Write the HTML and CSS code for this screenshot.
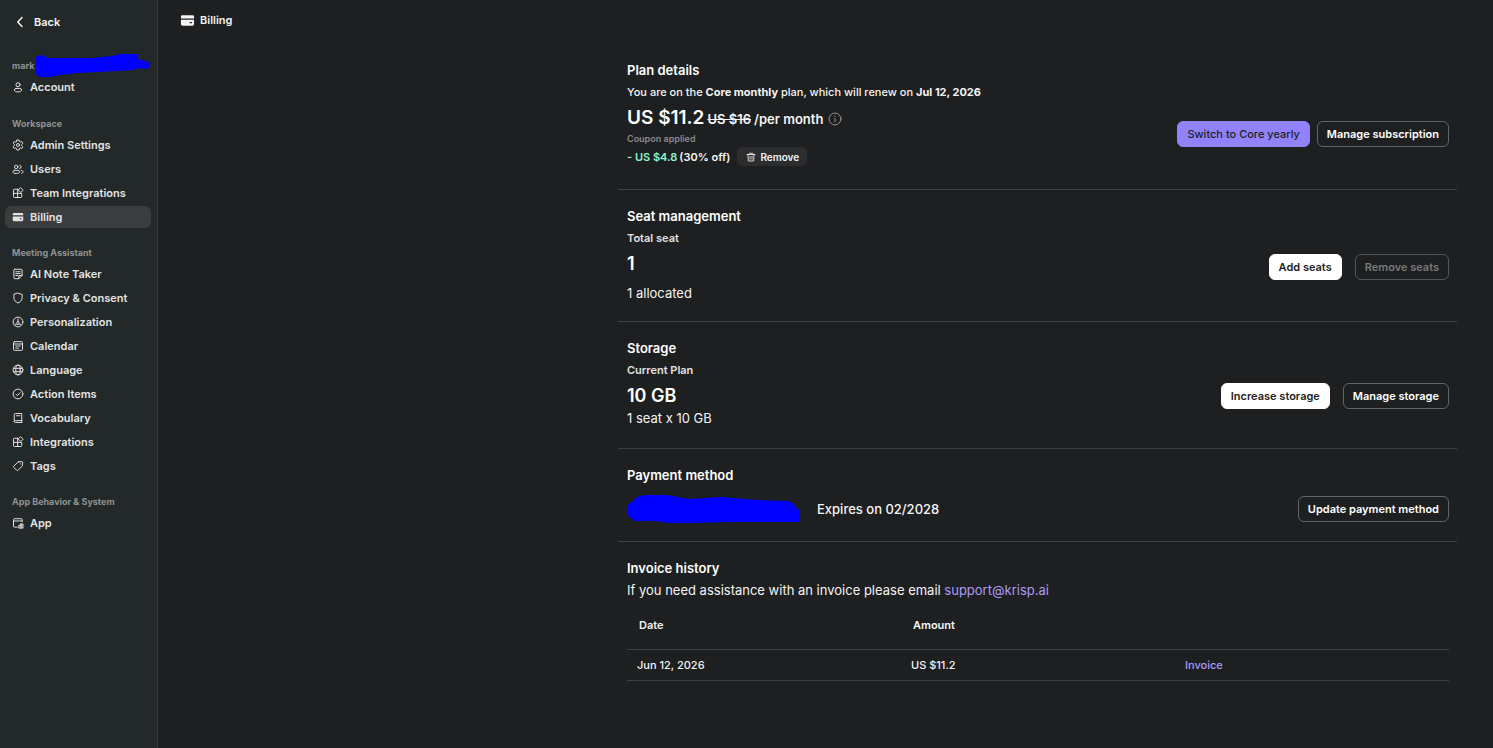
FILE: index.html
```html
<!DOCTYPE html>
<html lang="en">
<head>
<meta charset="utf-8">
<title>Billing</title>
<link rel="stylesheet" href="styles.css">
</head>
<body>
<div class="app">
  <aside class="sidebar">
    <button class="back" type="button">
      <svg class="back-icon" viewBox="0 0 12 12" aria-hidden="true"><path d="M8 1.600 3.800 6l4.200 4.400"/></svg>
      Back
    </button>
    <nav class="nav" aria-label="Settings">
      <section class="group group-account">
        <h2 class="group-title">mark<svg class="email-mask" viewBox="0 0 114 24" aria-hidden="true"><path d="M1 2 6 1l6 3h44l20-2L84 0h17l1 5 5 1 7 3v5l-6 1-6-1-5 2-35 2-20 1-18 2-10 2H3l-3-3V3z"/></svg></h2>
        <a class="item" href="#account"><svg class="icon" viewBox="0 0 16 16" aria-hidden="true"><circle cx="8" cy="5" r="2.7"/><path d="M5.400 9.900h5.200a2.300 2.300 0 0 1 2.200 2.300c0 1.400-2.100 2.300-4.800 2.300s-4.800-.9-4.800-2.300a2.300 2.300 0 0 1 2.200-2.300z"/></svg>Account</a>
      </section>
      <section class="group">
        <h2 class="group-title">Workspace</h2>
        <a class="item" href="#admin"><svg class="icon" viewBox="0 0 16 16" aria-hidden="true"><path d="M6.700 1.300h2.600l.5 1.900 1.300.8 1.900-.6 1.300 2.300-1.400 1.400v1.800l1.400 1.400-1.300 2.300-1.900-.6-1.300.8-.5 1.900H6.700l-.5-1.900-1.300-.8-1.900.6-1.300-2.300 1.400-1.400V7.100L1.700 5.700 3 3.400l1.900.6 1.300-.8z"/><circle cx="8" cy="8" r="2"/></svg>Admin Settings</a>
        <a class="item" href="#users"><svg class="icon" viewBox="0 0 16 16" aria-hidden="true"><circle cx="5.600" cy="5.200" r="2.300"/><path d="M3.300 9.800h4.600a2.100 2.100 0 0 1 2.100 2.100c0 1.300-1.900 2.100-4.400 2.100s-4.400-.8-4.400-2.100a2.100 2.100 0 0 1 2.100-2.100zM10.300 3a2.300 2.300 0 0 1 0 4.500M12.300 9.800c1.400.2 2.400 1 2.400 2.100 0 .8-.7 1.500-1.900 1.800"/></svg>Users</a>
        <a class="item" href="#team-integrations"><svg class="icon" viewBox="0 0 16 16" aria-hidden="true"><path d="M7.500 3H3.200A1.200 1.200 0 0 0 2 4.200v8.600A1.200 1.200 0 0 0 3.200 14h8.600a1.200 1.200 0 0 0 1.200-1.200V8.500H2M7.500 3v11M11.700 1.200 14.800 4.300l-3.100 3.100-3.100-3.100z"/></svg>Team Integrations</a>
        <a class="item item-active" href="#billing" aria-current="page"><svg class="icon icon-solid" viewBox="0 0 16 16" aria-hidden="true"><path d="M2.500 2.500h11A1.500 1.500 0 0 1 15 4v1.800H1V4a1.500 1.500 0 0 1 1.500-1.500zM1 7.200h14V12a1.500 1.500 0 0 1-1.500 1.500h-11A1.500 1.500 0 0 1 1 12zM10.300 9.700v1.200h2.500V9.700z" fill-rule="evenodd"/></svg>Billing</a>
      </section>
      <section class="group">
        <h2 class="group-title">Meeting Assistant</h2>
        <a class="item" href="#notes"><svg class="icon" viewBox="0 0 16 16" aria-hidden="true"><path d="M3.700 1.700h8.600a1.200 1.200 0 0 1 1.200 1.200v7L9.200 14.300H3.700a1.200 1.200 0 0 1-1.200-1.200V2.900a1.200 1.200 0 0 1 1.200-1.200zM5 5h6M5 7.500h6M5 10h2.500M9.200 14v-4h4.100"/></svg>AI Note Taker</a>
        <a class="item" href="#privacy"><svg class="icon" viewBox="0 0 16 16" aria-hidden="true"><path d="M8 1.500 13.500 3.400v4.400c0 3.300-2.300 5.500-5.500 6.800-3.200-1.300-5.500-3.500-5.500-6.800V3.400z"/></svg>Privacy &amp; Consent</a>
        <a class="item" href="#personalization"><svg class="icon" viewBox="0 0 16 16" aria-hidden="true"><circle cx="8" cy="8" r="6.500"/><path d="M8 4v3.500M8 7.500a1.500 1.500 0 0 1 1.300 2.400M8 7.500a1.500 1.500 0 0 0-1.300 2.400M4.300 11h7.400"/></svg>Personalization</a>
        <a class="item" href="#calendar"><svg class="icon" viewBox="0 0 16 16" aria-hidden="true"><rect x="2" y="2.200" width="12" height="11.600" rx="1.200"/><path d="M2 5.300h12M5 8h1.300M7.400 8h1.300M9.800 8h1.300M5 10.800h1.300M7.400 10.800h1.300"/></svg>Calendar</a>
        <a class="item" href="#language"><svg class="icon" viewBox="0 0 16 16" aria-hidden="true"><circle cx="8" cy="8" r="6.500"/><ellipse cx="8" cy="8" rx="3" ry="6.500"/><path d="M2.200 5.800h11.600M2.200 10.200h11.600"/></svg>Language</a>
        <a class="item" href="#actions"><svg class="icon" viewBox="0 0 16 16" aria-hidden="true"><circle cx="8" cy="8" r="6.500"/><path d="m5.300 8.200 1.900 1.900 3.700-3.900"/></svg>Action Items</a>
        <a class="item" href="#vocabulary"><svg class="icon" viewBox="0 0 16 16" aria-hidden="true"><path d="M13 11.500V2H4.500A1.500 1.500 0 0 0 3 3.500v9A1.500 1.500 0 0 0 4.500 14H13M13 11.500H4.500A1.400 1.400 0 0 0 3 12.700M13 11.500V14M6 5h4.500"/></svg>Vocabulary</a>
        <a class="item" href="#integrations"><svg class="icon" viewBox="0 0 16 16" aria-hidden="true"><path d="M7.500 3H3.200A1.200 1.200 0 0 0 2 4.200v8.600A1.200 1.200 0 0 0 3.200 14h8.600a1.200 1.200 0 0 0 1.200-1.200V8.500H2M7.500 3v11M11.700 1.200 14.800 4.300l-3.100 3.100-3.100-3.100z"/></svg>Integrations</a>
        <a class="item" href="#tags"><svg class="icon" viewBox="0 0 16 16" aria-hidden="true"><path d="M9 2.500 13.200 2.200a.9.9 0 0 1 1 1L13.800 7.300a2 2 0 0 1-.6 1.300l-5 5a1.500 1.500 0 0 1-2.100 0L2.500 10a1.500 1.500 0 0 1 0-2.100l5.200-4.800A2 2 0 0 1 9 2.500zM11 5.200h.2"/></svg>Tags</a>
      </section>
      <section class="group">
        <h2 class="group-title">App Behavior &amp; System</h2>
        <a class="item" href="#app"><svg class="icon" viewBox="0 0 16 16" aria-hidden="true"><path d="M7 13.500H3.200A1.200 1.200 0 0 1 2 12.300V3.500a1.200 1.200 0 0 1 1.200-1.200h9.100a1.200 1.200 0 0 1 1.200 1.200V6M2 5.300h11.500M9 14.300v-3h2v-2h3.700v5zM11 11.300v3M12.900 9.300v5"/></svg>App</a>
      </section>
    </nav>
  </aside>

  <main class="main">
    <header class="topbar">
      <svg class="topbar-icon" viewBox="0 0 16 16" aria-hidden="true"><path d="M2.500 2.500h11A1.500 1.500 0 0 1 15 4v1.800H1V4a1.500 1.500 0 0 1 1.500-1.500zM1 7.200h14V12a1.500 1.500 0 0 1-1.500 1.500h-11A1.500 1.500 0 0 1 1 12zM10.300 9.700v1.200h2.500V9.700z" fill-rule="evenodd"/></svg>
      <h1 class="topbar-title">Billing</h1>
    </header>

    <div class="content">
      <section class="panel panel-plan">
        <h2 class="panel-title">Plan details</h2>
        <p class="summary">You are on the <b>Core monthly</b> plan, which will renew on <b>Jul 12, 2026</b></p>
        <div class="panel-row">
          <div class="plan">
            <p class="price"><strong class="price-figure">US $11.2</strong><s>US $16</s><span>/per month</span><svg class="info" viewBox="0 0 16 16" aria-hidden="true"><circle cx="8" cy="8" r="6.800"/><path d="M8 7.200v4M8 4.600v.4"/></svg></p>
            <p class="coupon-label">Coupon applied</p>
            <div class="coupon">
              <span class="discount">- US $4.8</span><span>(30% off)</span>
              <button class="remove" type="button"><svg class="trash" viewBox="0 0 12 12" aria-hidden="true"><path d="M1.200 3h9.600M4 3V1.500h4V3M2.300 3l.5 7.800h6.400L9.700 3M4.800 5.200v3.500M7.200 5.200v3.500"/></svg>Remove</button>
            </div>
          </div>
          <div class="actions actions-tight">
            <button class="btn btn-accent" type="button">Switch to Core yearly</button>
            <button class="btn" type="button">Manage subscription</button>
          </div>
        </div>
      </section>

      <section class="panel">
        <h2 class="panel-title">Seat management</h2>
        <div class="panel-row panel-row-stat">
          <div class="stat stat-loose">
            <p class="label">Total seat</p>
            <p class="figure">1</p>
            <p class="text">1 allocated</p>
          </div>
          <div class="actions">
            <button class="btn btn-light" type="button">Add seats</button>
            <button class="btn" type="button" disabled>Remove seats</button>
          </div>
        </div>
      </section>

      <section class="panel">
        <h2 class="panel-title">Storage</h2>
        <div class="panel-row panel-row-stat">
          <div class="stat">
            <p class="label">Current Plan</p>
            <p class="figure">10 GB</p>
            <p class="text">1 seat x 10 GB</p>
          </div>
          <div class="actions">
            <button class="btn btn-light" type="button">Increase storage</button>
            <button class="btn" type="button">Manage storage</button>
          </div>
        </div>
      </section>

      <section class="panel">
        <h2 class="panel-title">Payment method</h2>
        <div class="panel-row payment">
          <div class="card">
            <svg class="card-mask" viewBox="0 0 174 30" aria-hidden="true"><path d="M10 3 18 1 40 1 62 5 95 3 130 6l32 1 5 3 2 4 4 2v12H140L100 28 65 29 42 29 28 27H8L2 23 0 17 1 11 6 7z"/></svg>
            <span>Expires on 02/2028</span>
          </div>
          <button class="btn" type="button">Update payment method</button>
        </div>
      </section>

      <section class="panel">
        <h2 class="panel-title">Invoice history</h2>
        <p class="text help">If you need assistance with an invoice please email <a class="link" href="mailto:support@krisp.ai">support@krisp.ai</a></p>
        <table class="invoices">
          <thead>
            <tr><th scope="col">Date</th><th scope="col">Amount</th><td></td></tr>
          </thead>
          <tbody>
            <tr><td>Jun 12, 2026</td><td>US $11.2</td><td><a class="link" href="#invoice">Invoice</a></td></tr>
          </tbody>
        </table>
      </section>
    </div>
  </main>
</div>
</body>
</html>
```
FILE: styles.css
```css
* {
  box-sizing: border-box;
}

body {
  margin: 0;
  background: #1e1f20;
  color: #f4f4f4;
  font-family: Inter, "Liberation Sans", sans-serif;
  font-size: 11px;
  font-weight: 500;
}

h1, h2, p {
  margin: 0;
}

button {
  font: inherit;
  color: inherit;
  cursor: pointer;
}

a {
  color: inherit;
  text-decoration: none;
}

svg {
  flex: none;
  fill: none;
  stroke: currentColor;
  stroke-linecap: round;
  stroke-linejoin: round;
}

.app {
  display: flex;
  min-height: 100vh;
}

/* Sidebar */
.sidebar {
  flex: none;
  width: 158px;
  padding: 12px 6px 0 5px;
  background: #232828;
  border-right: 1px solid #343838;
}

.back {
  display: flex;
  align-items: center;
  gap: 8px;
  height: 20px;
  padding: 0 9px;
  border: 0;
  background: none;
  font-weight: 600;
}

.back-icon {
  width: 12px;
  height: 12px;
  stroke-width: 1.5;
}

.nav {
  display: flex;
  flex-direction: column;
  gap: 16px;
  padding-top: 25px;
}

.group {
  display: flex;
  flex-direction: column;
  gap: 2px;
}

.group-account {
  padding-bottom: 1px;
}

.group-title {
  display: flex;
  align-items: center;
  gap: 2px;
  height: 17px;
  padding-left: 7px;
  color: #8f9393;
  font-size: 9px;
  font-weight: 700;
  white-space: nowrap;
}

.email-mask {
  width: 114px;
  height: 24px;
  fill: #0000ff;
  stroke: none;
}

.item {
  display: flex;
  align-items: center;
  gap: 6px;
  height: 22px;
  padding-left: 7px;
  border-radius: 6px;
  color: #e2e4e4;
  font-weight: 600;
  white-space: nowrap;
}

.item-active {
  background: #3a3c3d;
}

.icon {
  width: 12px;
  height: 12px;
  stroke-width: 1.3;
}

.icon-solid,
.topbar-icon {
  fill: currentColor;
  stroke: none;
}

/* Main */
.main {
  flex: 1;
  min-width: 0;
  padding: 0 36px 0 22px;
}

.topbar {
  display: flex;
  align-items: center;
  gap: 5px;
  height: 40px;
}

.topbar-icon {
  width: 15px;
  height: 15px;
}

.topbar-title {
  font-size: 11px;
  font-weight: 600;
}

.content {
  max-width: 839px;
  margin-left: auto;
}

.panel {
  padding: 16px 8px 16px 9px;
}

.panel + .panel {
  border-top: 1px solid #3f4041;
}

.panel-plan {
  padding-top: 20px;
  padding-bottom: 23px;
}

.panel-title {
  color: #ffffff;
  font-size: 13px;
  font-weight: 600;
  line-height: 20px;
}

.summary {
  padding-top: 2px;
  line-height: 20px;
}

.summary b {
  font-weight: 700;
}

.panel-row {
  display: flex;
  align-items: center;
  justify-content: space-between;
  gap: 16px;
}

.panel-row-stat {
  padding-top: 2px;
}

.price {
  display: flex;
  align-items: baseline;
  gap: 3px;
  padding-top: 4px;
  font-size: 13px;
  font-weight: 600;
  line-height: 23px;
}

.price-figure {
  color: #ffffff;
  font-size: 19px;
  font-weight: 600;
}

.info {
  align-self: center;
  width: 14px;
  height: 14px;
  margin-left: 2px;
  color: #a0a0a0;
}

.coupon-label {
  color: #8a8c8d;
  font-size: 9px;
  font-weight: 600;
  line-height: 15px;
}

.coupon {
  display: flex;
  align-items: center;
  gap: 2px;
  padding-top: 1px;
  font-weight: 600;
}

.discount {
  color: #8ff0cf;
}

.remove {
  display: flex;
  align-items: center;
  gap: 4px;
  height: 19px;
  margin-left: 5px;
  padding: 0 8px 0 9px;
  border: 0;
  border-radius: 5px;
  background: #2c2d2f;
  font-size: 10px;
  font-weight: 600;
}

.trash {
  width: 10px;
  height: 10px;
}

.actions {
  display: flex;
  gap: 13px;
}

.actions-tight {
  gap: 7px;
}

.btn {
  height: 26px;
  padding: 0 9px;
  border: 1px solid #646566;
  border-radius: 6px;
  background: transparent;
  color: #ffffff;
  font-size: 11px;
  font-weight: 600;
  white-space: nowrap;
}

.btn:disabled {
  border-color: #545556;
  color: #77797a;
  cursor: default;
}

.btn-accent {
  border-color: #9182fb;
  background: #9182fb;
  color: #1e1f20;
  font-weight: 500;
}

.btn-light {
  border-color: #ffffff;
  background: #ffffff;
  color: #1e1f20;
}

.stat {
  padding-bottom: 4px;
}

.stat-loose {
  padding-bottom: 2px;
}

.label {
  color: #e2e3e3;
  font-weight: 600;
  line-height: 20px;
}

.figure {
  padding-top: 4px;
  color: #ffffff;
  font-size: 18px;
  font-weight: 600;
  line-height: 24px;
}

.text {
  font-size: 13px;
  font-weight: 400;
  line-height: 20px;
}

.stat-loose .text {
  padding-top: 7px;
}

.payment {
  padding-top: 9px;
  padding-bottom: 1px;
}

.card {
  display: flex;
  align-items: center;
  gap: 16px;
  font-size: 13px;
}

.card-mask {
  width: 174px;
  height: 30px;
  fill: #0000ff;
  stroke: none;
}

.help {
  padding-top: 2px;
}

.link {
  color: #a99bf8;
}

/* Invoices */
.invoices {
  width: 100%;
  margin-top: 10px;
  border-collapse: collapse;
  table-layout: fixed;
  text-align: left;
}

.invoices th {
  height: 39px;
  padding: 0 12px 9px;
  font-weight: 600;
}

.invoices tbody td {
  height: 31px;
  padding: 0 10px;
  border-top: 1px solid #3f4041;
  border-bottom: 1px solid #3f4041;
}
```
